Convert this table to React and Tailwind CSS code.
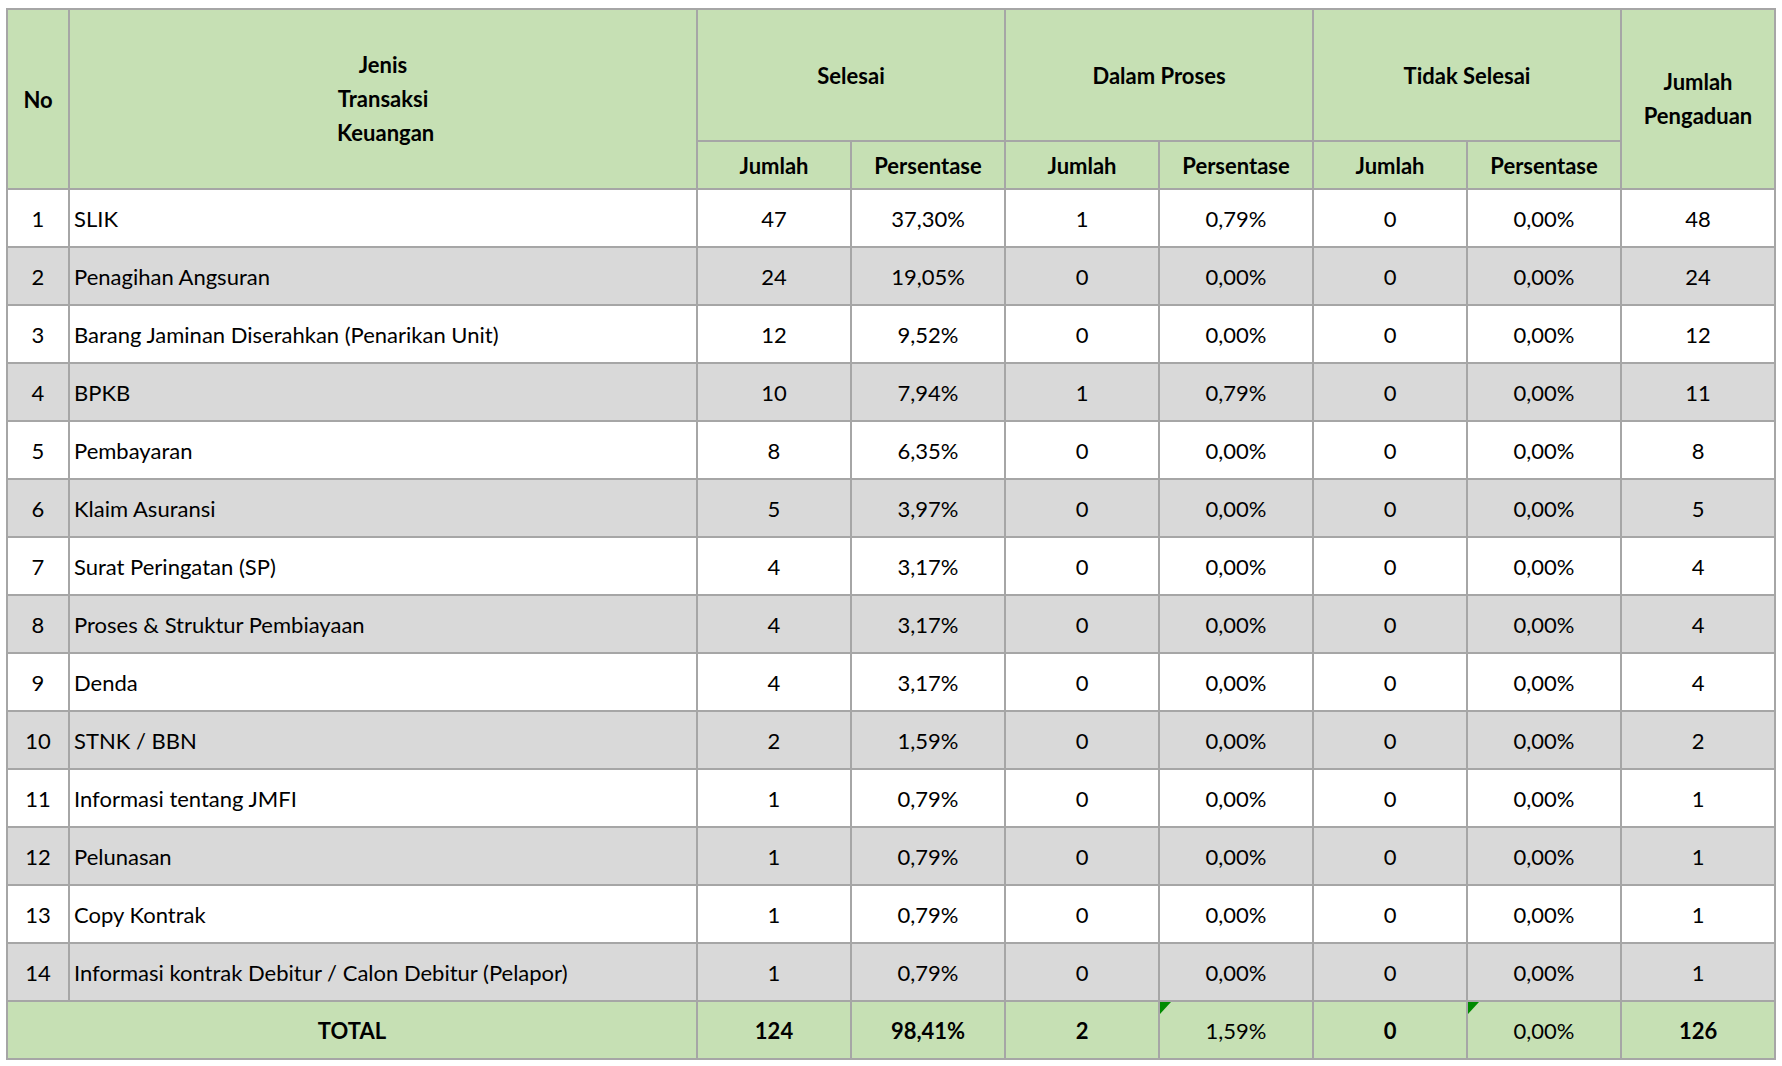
import React from "react";

const rows = [
  [1, "SLIK", "47", "37,30%", "1", "0,79%", "0", "0,00%", "48"],
  [2, "Penagihan Angsuran", "24", "19,05%", "0", "0,00%", "0", "0,00%", "24"],
  [3, "Barang Jaminan Diserahkan (Penarikan Unit)", "12", "9,52%", "0", "0,00%", "0", "0,00%", "12"],
  [4, "BPKB", "10", "7,94%", "1", "0,79%", "0", "0,00%", "11"],
  [5, "Pembayaran", "8", "6,35%", "0", "0,00%", "0", "0,00%", "8"],
  [6, "Klaim Asuransi", "5", "3,97%", "0", "0,00%", "0", "0,00%", "5"],
  [7, "Surat Peringatan (SP)", "4", "3,17%", "0", "0,00%", "0", "0,00%", "4"],
  [8, "Proses & Struktur Pembiayaan", "4", "3,17%", "0", "0,00%", "0", "0,00%", "4"],
  [9, "Denda", "4", "3,17%", "0", "0,00%", "0", "0,00%", "4"],
  [10, "STNK / BBN", "2", "1,59%", "0", "0,00%", "0", "0,00%", "2"],
  [11, "Informasi tentang JMFI", "1", "0,79%", "0", "0,00%", "0", "0,00%", "1"],
  [12, "Pelunasan", "1", "0,79%", "0", "0,00%", "0", "0,00%", "1"],
  [13, "Copy Kontrak", "1", "0,79%", "0", "0,00%", "0", "0,00%", "1"],
  [14, "Informasi kontrak Debitur / Calon Debitur (Pelapor)", "1", "0,79%", "0", "0,00%", "0", "0,00%", "1"],
];

const cell = "border-2 border-[#a6a6a6] p-0";

function Tri() {
  return (
    <span className="absolute left-0 top-0 w-0 h-0 border-t-[12px] border-t-[#008a00] border-r-[11px] border-r-transparent" />
  );
}

export default function App() {
  return (
    <div
      className="bg-white w-[1782px] h-[1066px] pt-[8px] pl-[6px] text-black"
      style={{ fontFamily: '"Lato", "Open Sans", sans-serif' }}
    >
      <table className="table-fixed border-collapse w-[1769px] text-[22px]">
        <colgroup>
          <col className="w-[62px]" />
          <col className="w-[628px]" />
          <col className="w-[154px]" />
          <col className="w-[154px]" />
          <col className="w-[154px]" />
          <col className="w-[154px]" />
          <col className="w-[154px]" />
          <col className="w-[154px]" />
          <col className="w-[154px]" />
        </colgroup>
        <thead className="bg-[#c6e0b4] font-bold">
          <tr className="h-[132px]">
            <td rowSpan={2} className={`${cell} text-center`}>No</td>
            <td rowSpan={2} className={`${cell} text-center leading-[34px]`}>
              <div>Jenis</div>
              <div>Transaksi</div>
              <div>&nbsp;Keuangan</div>
            </td>
            <td colSpan={2} className={`${cell} text-center`}>Selesai</td>
            <td colSpan={2} className={`${cell} text-center`}>Dalam Proses</td>
            <td colSpan={2} className={`${cell} text-center`}>Tidak Selesai</td>
            <td rowSpan={2} className={`${cell} text-center leading-[34px]`}>
              <div>Jumlah</div>
              <div>Pengaduan</div>
            </td>
          </tr>
          <tr className="h-[48px]">
            <td className={`${cell} text-center`}>Jumlah</td>
            <td className={`${cell} text-center`}>Persentase</td>
            <td className={`${cell} text-center`}>Jumlah</td>
            <td className={`${cell} text-center`}>Persentase</td>
            <td className={`${cell} text-center`}>Jumlah</td>
            <td className={`${cell} text-center`}>Persentase</td>
          </tr>
        </thead>
        <tbody>
          {rows.map((r, i) => (
            <tr key={r[0]} className={`h-[58px] ${i % 2 === 1 ? "bg-[#d9d9d9]" : "bg-white"}`}>
              <td className={`${cell} text-center`}>{r[0]}</td>
              <td className={`${cell} text-left pl-[4px] whitespace-nowrap`}>{r[1]}</td>
              {r.slice(2).map((v, j) => (
                <td key={j} className={`${cell} text-center`}>{v}</td>
              ))}
            </tr>
          ))}
          <tr className="h-[58px] bg-[#c6e0b4]">
            <td colSpan={2} className={`${cell} text-center font-bold`}>TOTAL</td>
            <td className={`${cell} text-center font-bold`}>124</td>
            <td className={`${cell} text-center font-bold`}>98,41%</td>
            <td className={`${cell} text-center font-bold`}>2</td>
            <td className={`${cell} text-center relative`}><Tri />1,59%</td>
            <td className={`${cell} text-center font-bold`}>0</td>
            <td className={`${cell} text-center relative`}><Tri />0,00%</td>
            <td className={`${cell} text-center font-bold`}>126</td>
          </tr>
        </tbody>
      </table>
    </div>
  );
}
